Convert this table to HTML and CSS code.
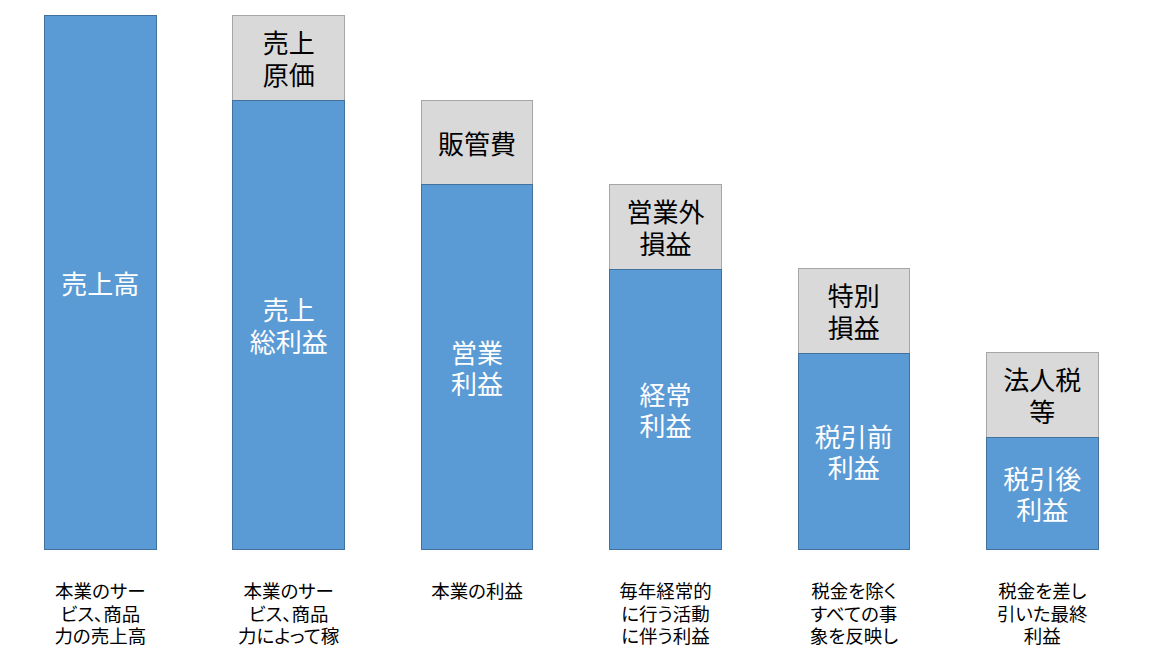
FILE: index.html
```html
<!DOCTYPE html>
<html lang="ja">
<head>
<meta charset="utf-8">
<title>損益の構造</title>
<link rel="stylesheet" href="styles.css">
</head>
<body>
<div class="chart">
  <div class="col">
    <div class="plot">
      <div class="seg profit" style="height:535px"><span class="ln">売上高</span></div>
    </div>
    <div class="note"><span class="nl">本業のサー</span><span class="nl">ビス、商品</span><span class="nl">力の売上高</span></div>
  </div>
  <div class="col">
    <div class="plot">
      <div class="seg cost"><span class="ln">売上</span><span class="ln">原価</span></div>
      <div class="seg profit" style="height:450.5px"><span class="ln">売上</span><span class="ln">総利益</span></div>
    </div>
    <div class="note"><span class="nl">本業のサー</span><span class="nl">ビス、商品</span><span class="nl">力によって稼</span></div>
  </div>
  <div class="col">
    <div class="plot">
      <div class="seg cost"><span class="ln">販管費</span></div>
      <div class="seg profit" style="height:366px"><span class="ln">営業</span><span class="ln">利益</span></div>
    </div>
    <div class="note"><span class="nl">本業の利益</span></div>
  </div>
  <div class="col">
    <div class="plot">
      <div class="seg cost"><span class="ln">営業外</span><span class="ln">損益</span></div>
      <div class="seg profit" style="height:281.5px"><span class="ln">経常</span><span class="ln">利益</span></div>
    </div>
    <div class="note"><span class="nl">毎年経常的</span><span class="nl">に行う活動</span><span class="nl">に伴う利益</span></div>
  </div>
  <div class="col">
    <div class="plot">
      <div class="seg cost"><span class="ln">特別</span><span class="ln">損益</span></div>
      <div class="seg profit" style="height:197.5px"><span class="ln">税引前</span><span class="ln">利益</span></div>
    </div>
    <div class="note"><span class="nl">税金を除く</span><span class="nl">すべての事</span><span class="nl">象を反映し</span></div>
  </div>
  <div class="col">
    <div class="plot">
      <div class="seg cost"><span class="ln">法人税</span><span class="ln">等</span></div>
      <div class="seg profit" style="height:113.5px"><span class="ln">税引後</span><span class="ln">利益</span></div>
    </div>
    <div class="note"><span class="nl">税金を差し</span><span class="nl">引いた最終</span><span class="nl">利益</span></div>
  </div>
</div>
</body>
</html>
```
FILE: styles.css
```css
html, body {
  margin: 0;
  padding: 0;
  background: #ffffff;
}
body {
  width: 1152px;
  height: 648px;
  overflow: hidden;
  font-family: "Noto Sans CJK JP", "Noto Sans", sans-serif;
  color: #000000;
}
.chart {
  display: grid;
  grid-template-columns: repeat(6, 112.6px);
  column-gap: 75.8px;
  padding: 15px 0 0 44px;
}
.col {
  display: flex;
  flex-direction: column;
  align-items: center;
}
.plot {
  width: 100%;
  height: 535px;
  display: flex;
  flex-direction: column;
  justify-content: flex-end;
}
.seg {
  box-sizing: border-box;
  display: flex;
  flex-direction: column;
  align-items: center;
  justify-content: center;
  text-align: center;
  font-size: 26px;
  flex: none;
}
.ln {
  display: block;
  height: 31.5px;
  line-height: 31.5px;
  white-space: nowrap;
}
.cost {
  height: 84.5px;
  background: #d9d9d9;
  border: 1px solid #a6a6a6;
  border-bottom: 0;
  color: #000000;
}
.profit {
  background: #5b9bd5;
  border: 1px solid #41719c;
  color: #ffffff;
}
.note {
  margin-top: 29px;
  display: flex;
  flex-direction: column;
  align-items: center;
  font-size: 18.5px;
  font-feature-settings: "palt";
}
.nl {
  display: block;
  height: 22.7px;
  line-height: 22.7px;
  white-space: nowrap;
}
```
